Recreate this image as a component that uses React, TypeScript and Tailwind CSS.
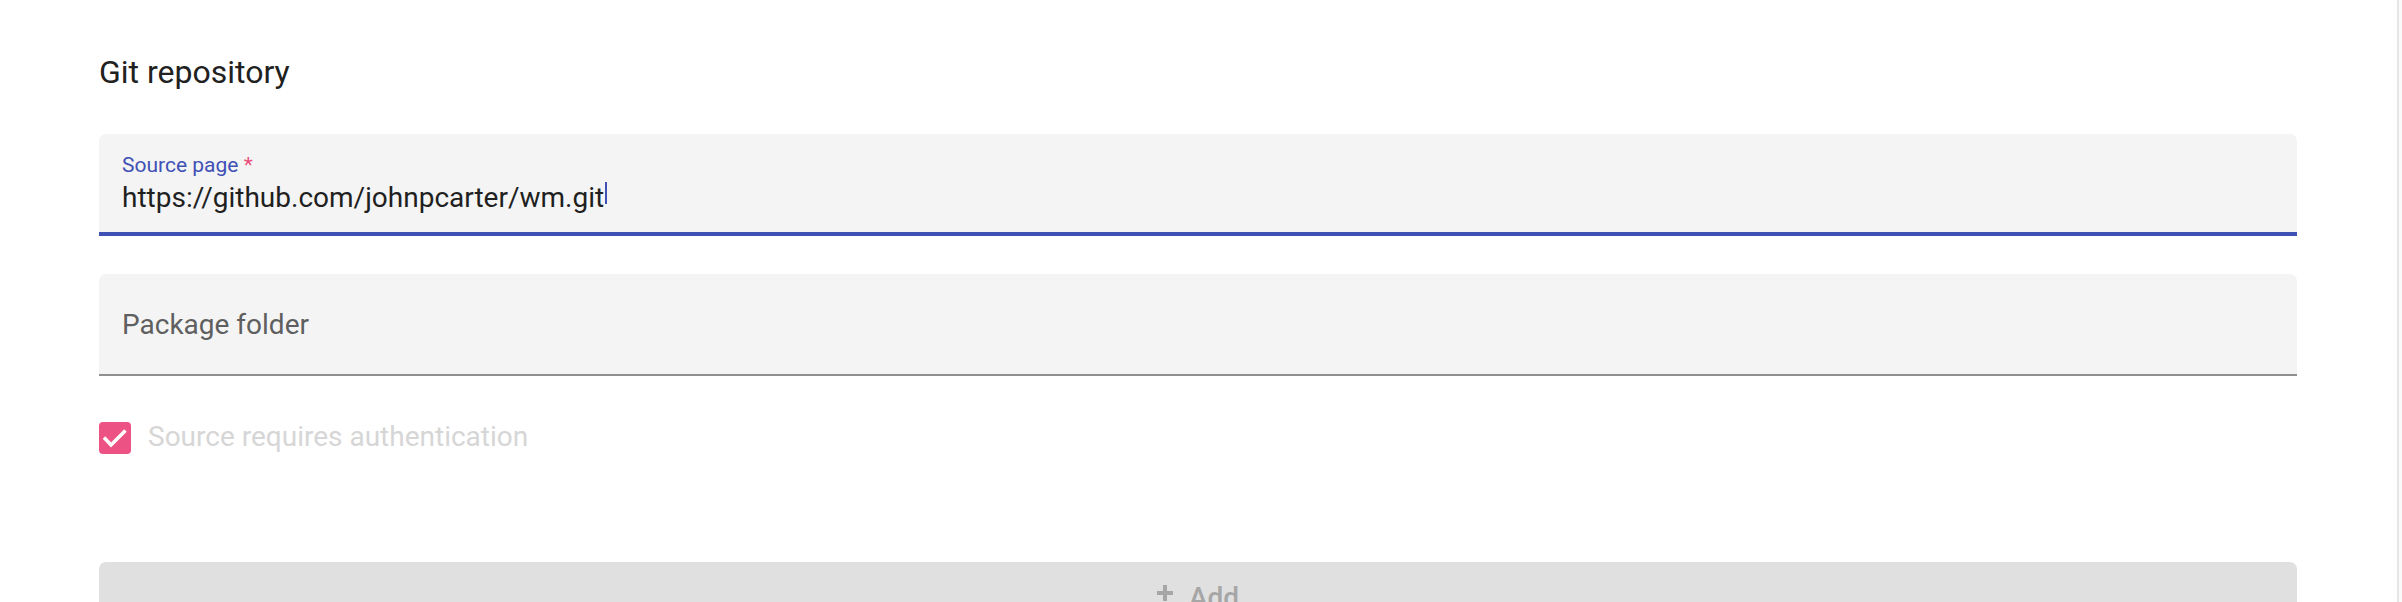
export default function App() {
  return (
    <div className="flex h-[602px] w-[2402px] overflow-hidden bg-white font-[Roboto,'Liberation_Sans',sans-serif]">
      <div className="flex-1 pl-[99px] pr-[100px] pt-[52px]">
        {/* Heading */}
        <h2 className="text-[32px] leading-[40px] font-normal text-[#212121]">Git repository</h2>

        {/* Source page (focused) */}
        <div className="mt-[42px] flex h-[102px] flex-col rounded-t-[7px] border-b-4 border-[#3f51b5] bg-[#f4f4f4] pl-[23px] pt-[19px]">
          <label className="text-[21px] leading-[24px] text-[#3f51b5]">
            Source page <span className="text-[#e94e7c]">*</span>
          </label>
          <div className="mt-[5px] text-[28px] leading-[32px] text-[#1f1f1f]">
            https://github.com/johnpcarter/wm.git
            <span className="ml-[1px] inline-block h-[22px] w-[2px] bg-[#3f51b5] align-[3px]" />
          </div>
        </div>

        {/* Package folder */}
        <div className="mt-[38px] h-[102px] rounded-t-[7px] border-b-2 border-[#8f8f8f] bg-[#f4f4f4] pl-[23px] pt-[35px]">
          <div className="text-[28px] leading-[32px] text-[#5f5f5f]">Package folder</div>
        </div>

        {/* Checkbox */}
        <div className="mt-[45px] flex items-start gap-[17px]">
          <div className="mt-[1px] flex h-[32px] w-[32px] items-center justify-center rounded-[4px] bg-[#ed5285]">
            <svg width="32" height="32" viewBox="0 0 32 32" fill="none">
              <polyline points="5,15.5 12,23 26.5,8.5" stroke="white" strokeWidth="3.5" />
            </svg>
          </div>
          <span className="text-[28px] leading-[32px] text-[#d6d6d6]">Source requires authentication</span>
        </div>

        {/* Add button */}
        <div className="mt-[108px] flex items-start justify-center gap-[16px] rounded-t-[7px] bg-[#e0e0e0] pt-[20px] pb-[20px]">
          <svg width="16" height="16" viewBox="0 0 16 16" className="mt-[3px]" fill="#a6a6a6">
            <rect x="6" y="0" width="4" height="16" />
            <rect x="0" y="6" width="16" height="4" />
          </svg>
          <span className="text-[28px] leading-[32px] font-medium text-[#a6a6a6]">Add</span>
        </div>
      </div>

      {/* scrollbar edge */}
      <div className="w-[5px] border-l-2 border-[#e6e6e6] bg-[#fafafa]" />
    </div>
  )
}
